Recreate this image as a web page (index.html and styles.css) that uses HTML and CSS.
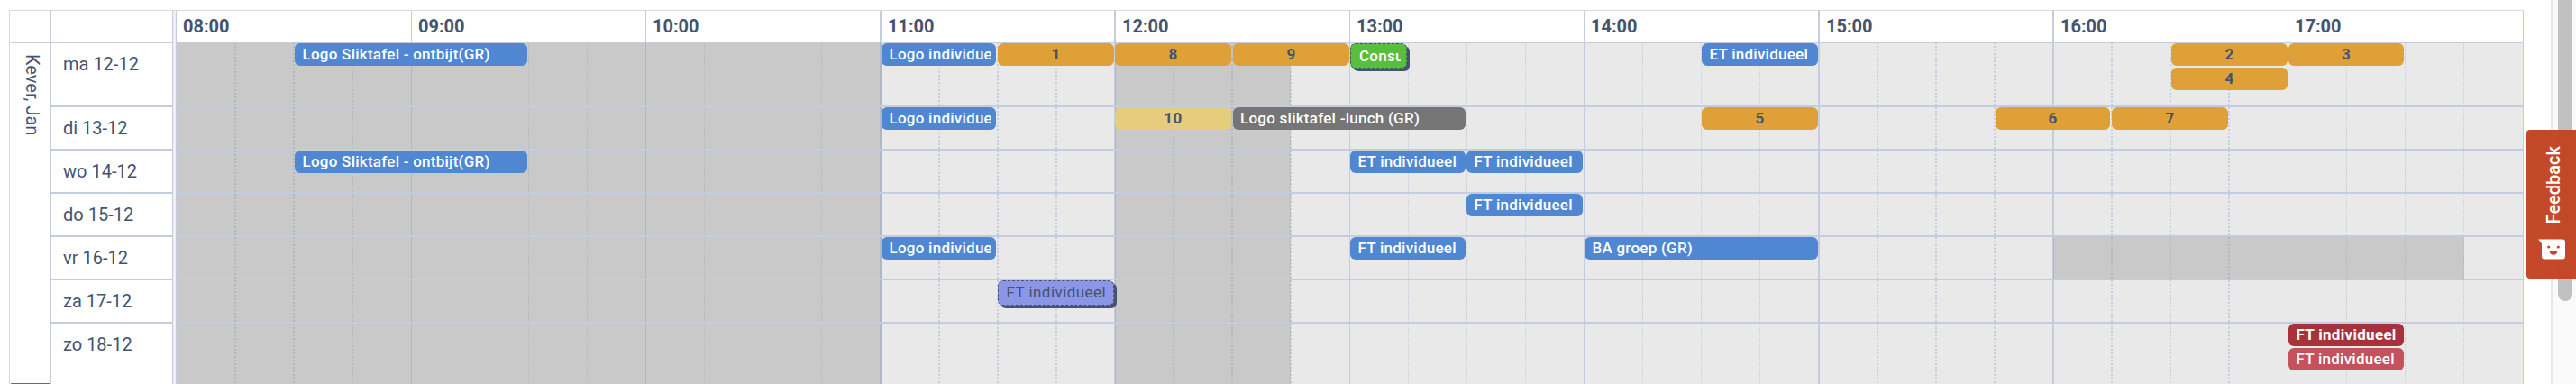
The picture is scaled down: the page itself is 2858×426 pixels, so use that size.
FILE: index.html
```html
<!DOCTYPE html>
<html lang="nl">
<head>
<meta charset="utf-8">
<title>Weekplanning</title>
<link rel="stylesheet" href="styles.css">
</head>
<body>
<main class="planner">
  <section class="resources">
    <div class="resource">
      <div class="corner"></div>
      <div class="name">Kever, Jan</div>
      <div class="resource-end"></div>
    </div>
    <div class="days">
      <div class="corner"></div>
      <div class="day tall">ma 12-12</div>
      <div class="day">di 13-12</div>
      <div class="day">wo 14-12</div>
      <div class="day">do 15-12</div>
      <div class="day">vr 16-12</div>
      <div class="day">za 17-12</div>
      <div class="day last">zo 18-12</div>
    </div>
  </section>
  <div class="divider"></div>
  <section class="timeline">
    <div class="hours">
      <div class="hour wide dashed"><h2>08:00</h2><div class="quarters"><i></i><i></i><i></i><i></i></div></div>
      <div class="hour"><h2>09:00</h2><div class="quarters"><i></i><i></i><i></i><i></i></div></div>
      <div class="hour"><h2>10:00</h2><div class="quarters"><i></i><i></i><i></i><i></i></div></div>
      <div class="hour thick dashed"><h2>11:00</h2><div class="quarters"><i></i><i></i><i></i><i></i></div></div>
      <div class="hour wide thick dashed"><h2>12:00</h2><div class="quarters"><i></i><i></i><i></i><i></i></div></div>
      <div class="hour"><h2>13:00</h2><div class="quarters"><i></i><i></i><i></i><i></i></div></div>
      <div class="hour"><h2>14:00</h2><div class="quarters"><i></i><i></i><i></i><i></i></div></div>
      <div class="hour thick dashed"><h2>15:00</h2><div class="quarters"><i></i><i></i><i></i><i></i></div></div>
      <div class="hour wide thick dashed"><h2>16:00</h2><div class="quarters"><i></i><i></i><i></i><i></i></div></div>
      <div class="hour wide"><h2>17:00</h2><div class="quarters"><i></i><i></i><i></i><i></i></div></div>
    </div>
    <div class="shades">
      <div class="shade" style="width:782px"></div>
      <div class="shade" style="margin-left:259px;width:195px"></div>
    </div>
    <div class="lanes">
      <div class="lane tall">
        <div class="line">
          <div class="event blue" style="margin-left:131px;width:258px">Logo Sliktafel - ontbijt(GR)</div>
          <div class="event blue" style="margin-left:393px;width:127px">Logo individueel</div>
          <div class="event orange" style="margin-left:2px;width:129px">1</div>
          <div class="event orange" style="margin-left:1px;width:129px">8</div>
          <div class="event orange" style="margin-left:2px;width:129px">9</div>
          <div class="event pinned green" style="margin-left:1px;width:63px">Consult</div>
          <div class="event blue" style="margin-left:327px;width:129px">ET individueel</div>
          <div class="event orange" style="margin-left:392px;width:129px">2</div>
          <div class="event orange" style="margin-left:1px;width:128px">3</div>
        </div>
        <div class="line">
          <div class="event orange" style="margin-left:2213px;width:129px">4</div>
        </div>
      </div>
      <div class="lane">
        <div class="line">
          <div class="event blue" style="margin-left:782px;width:127px">Logo individueel</div>
          <div class="event yellow" style="margin-left:132px;width:129px">10</div>
          <div class="event gray" style="margin-left:2px;width:258px">Logo sliktafel -lunch (GR)</div>
          <div class="event orange" style="margin-left:262px;width:129px">5</div>
          <div class="event orange" style="margin-left:197px;width:127px">6</div>
          <div class="event orange" style="margin-left:2px;width:129px">7</div>
        </div>
      </div>
      <div class="lane">
        <div class="line">
          <div class="event blue" style="margin-left:131px;width:258px">Logo Sliktafel - ontbijt(GR)</div>
          <div class="event blue" style="margin-left:913px;width:128px">ET individueel</div>
          <div class="event blue" style="margin-left:1px;width:129px">FT individueel</div>
        </div>
      </div>
      <div class="lane">
        <div class="line">
          <div class="event blue" style="margin-left:1431px;width:129px">FT individueel</div>
        </div>
      </div>
      <div class="lane">
        <div class="lane-shade" style="margin-left:2082px;width:456px"></div>
        <div class="line">
          <div class="event blue" style="margin-left:782px;width:127px">Logo individueel</div>
          <div class="event blue" style="margin-left:393px;width:128px">FT individueel</div>
          <div class="event blue" style="margin-left:132px;width:259px">BA groep (GR)</div>
        </div>
      </div>
      <div class="lane">
        <div class="line">
          <div class="event pinned violet" style="margin-left:911px;width:129px">FT individueel</div>
        </div>
      </div>
      <div class="lane last">
        <div class="line">
          <div class="event red" style="margin-left:2343px;width:128px">FT individueel</div>
        </div>
        <div class="line">
          <div class="event rose" style="margin-left:2343px;width:128px">FT individueel</div>
        </div>
      </div>
    </div>
  </section>
</main>
<div class="scrollbar"><div class="thumb"></div></div>
<button class="feedback" type="button">
  <span>Feedback</span>
  <svg width="30" height="23" viewBox="0 0 30 23">
    <path fill="#fff" d="M0 0.5H27A3 3 0 0 1 30 3.500V19.500A3 3 0 0 1 27 22.500H7A3 3 0 0 1 4 19.500V5Z"/>
    <circle cx="11.700" cy="9" r="1.600" fill="#c34828"/>
    <circle cx="22.300" cy="9" r="1.600" fill="#c34828"/>
    <path fill="#c34828" d="M12.500 13.500H21.500A4.500 4.200 0 0 1 12.500 13.500Z"/>
  </svg>
</button>
</body>
</html>
```
FILE: styles.css
```css
* {
  box-sizing: border-box;
}

body {
  margin: 0;
  height: 426px;
  display: flex;
  justify-content: space-between;
  overflow: hidden;
  background: #fff;
  color: #45536f;
  font: 20px/24px Roboto, "Liberation Sans", sans-serif;
}

.planner {
  display: flex;
  width: 2790px;
  height: 415px;
  margin: 11px 0 0 10px;
  border: solid #d9dadc;
  border-width: 1px 0 0 1px;
}

/* resource and day columns */
.resources {
  display: flex;
  width: 180px;
  padding-left: 1px;
}

.resource {
  display: flex;
  flex-direction: column;
  width: 45px;
  border-right: 1px solid #c3cddf;
}

.days {
  flex: 1;
}

.corner {
  height: 36px;
  border-bottom: 1px solid #c3cddf;
}

.name {
  flex: 1;
  padding: 12px 2px 0 0;
  line-height: 36px;
  writing-mode: vertical-rl;
}

.resource-end {
  height: 1px;
  background: #6c687a;
}

.day {
  height: 48px;
  padding: 11px 0 0 13px;
  border-bottom: 2px solid #c3cddf;
}

.day.tall {
  height: 71px;
}

.day.last {
  height: 67px;
  border-bottom: 0;
}

.divider {
  width: 4px;
  border-left: 1px solid #c3cddf;
  background: #f0f0f0;
}

/* time grid: hours, shading and event lanes share one cell */
.timeline {
  display: grid;
  flex: 1;
  grid-template-columns: 1fr;
  border-right: 1px solid #c3cddf;
}

.hours,
.shades,
.lanes {
  grid-area: 1 / 1;
  min-width: 0;
}

.hours {
  display: flex;
}

.hour {
  display: flex;
  flex-direction: column;
  width: 260px;
  border-left: 1px solid #c3cddf;
}

.hour.wide {
  width: 261px;
}

.hour.thick {
  border-left-width: 2px;
}

.hour h2 {
  height: 36px;
  margin: 0;
  padding: 5px 0 0 7px;
  border-bottom: 1px solid #c3cddf;
  font-size: 20px;
  line-height: 24px;
  font-weight: 700;
}

.quarters {
  display: flex;
  flex: 1;
  background: #e9e9e9;
}

.quarters i {
  width: 65px;
  background: repeating-linear-gradient(#c3cddf 0 1px, transparent 1px 2px) 0 0 / 1px 100% no-repeat;
}

.quarters i:last-child {
  flex: 1;
}

.dashed .quarters i {
  background: repeating-linear-gradient(#c3cddf 0 1px, transparent 1px 3px, #c3cddf 3px 4px) 0 0 / 2px 100% no-repeat;
}

.hour .quarters i:first-child {
  width: 64px;
  background: none;
}

.thick .quarters i:first-child {
  width: 63px;
}

.shades {
  display: flex;
  margin: 36px 0 0 1px;
}

.shade,
.lane-shade {
  background: rgba(136, 136, 136, 0.33);
}

.lanes {
  margin: 36px 0 0 1px;
}

.lane {
  display: grid;
  grid-template-columns: 1fr;
  align-content: start;
  gap: 2px;
  height: 48px;
  border-bottom: 2px solid #c3cddf;
}

.lane.tall {
  height: 71px;
}

.lane.last {
  height: 67px;
  border-bottom: 0;
}

.lane-shade {
  grid-area: 1 / 1;
  height: 46px;
}

.line {
  display: flex;
  height: 25px;
}

.lane-shade + .line {
  grid-area: 1 / 1;
}

.event {
  flex: none;
  height: 25px;
  padding: 0 6px 0 8px;
  border-radius: 6px;
  overflow: clip;
  overflow-clip-margin: content-box;
  color: #fff;
  font-size: 17px;
  line-height: 25px;
  font-weight: 500;
  letter-spacing: 0.25px;
  white-space: nowrap;
}

.blue {
  padding-left: 8.5px;
  background-color: #4f87d3;
}

.orange,
.yellow {
  padding: 0;
  text-align: center;
  color: #45536f;
  font-weight: 700;
}

.orange {
  background-color: #dfa037;
}

.yellow {
  background-color: #e6cd7d;
  letter-spacing: 0.5px;
}

.gray {
  background-color: #757575;
}

.red {
  padding-left: 8.5px;
  background-color: #a93139;
  font-weight: 700;
  letter-spacing: 0.3px;
}

.rose {
  padding-left: 8.5px;
  background-color: #c3525c;
}

.pinned {
  height: 28px;
  border: 1px dashed #45536f;
  box-shadow: 3px 3px 0 #45536f;
}

.green {
  padding: 1px 6px 0 9px;
  background-color: #59bd3d;
}

.violet {
  padding-left: 8.5px;
  background-color: #8b96e6;
  color: #45536f;
  font-weight: 400;
  letter-spacing: 0.45px;
}

/* page edge */
.scrollbar {
  width: 28px;
  border-left: 2px solid #e8e8e8;
  background: #fafafa;
}

.thumb {
  width: 16px;
  height: 334px;
  margin-left: 6px;
  border-radius: 0 0 8px 8px;
  background: #c1c1c1;
}

.feedback {
  position: absolute;
  top: 144px;
  right: 0;
  display: flex;
  flex-direction: column;
  align-items: center;
  width: 55px;
  height: 165px;
  margin: 0;
  padding: 18px 0 0 5px;
  border: 0;
  border-radius: 4px 0 0 4px;
  background: rgba(195, 69, 36, 0.98);
  color: #fff;
  font: 500 20px/24px Roboto, "Liberation Sans", sans-serif;
}

.feedback span {
  writing-mode: vertical-rl;
  transform: rotate(180deg);
}

.feedback svg {
  margin: 17px 4px 0 0;
}
```
